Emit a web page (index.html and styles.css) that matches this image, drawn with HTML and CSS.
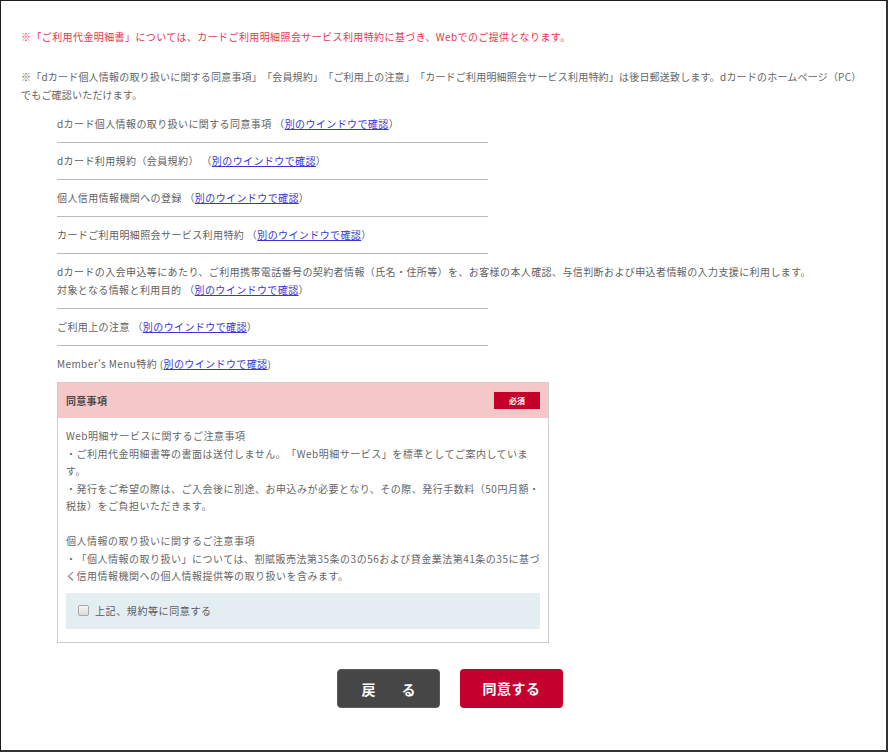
FILE: index.html
```html
<!DOCTYPE html>
<html lang="ja">
<head>
<meta charset="utf-8">
<title>同意事項</title>
<link rel="stylesheet" href="styles.css">
</head>
<body>
<div class="page">
  <p class="notice">※「ご利用代金明細書」については、カードご利用明細照会サービス利用特約に基づき、Webでのご提供となります。</p>
  <p class="note">※「dカード個人情報の取り扱いに関する同意事項」「会員規約」「ご利用上の注意」「カードご利用明細照会サービス利用特約」は後日郵送致します。dカードのホームページ（PC）<br>でもご確認いただけます。</p>

  <ul class="terms">
    <li class="term">dカード個人情報の取り扱いに関する同意事項 （<a href="#">別のウインドウで確認</a>）</li>
    <li class="term">dカード利用規約（会員規約） （<a href="#">別のウインドウで確認</a>）</li>
    <li class="term">個人信用情報機関への登録 （<a href="#">別のウインドウで確認</a>）</li>
    <li class="term">カードご利用明細照会サービス利用特約 （<a href="#">別のウインドウで確認</a>）</li>
    <li class="term">dカードの入会申込等にあたり、ご利用携帯電話番号の契約者情報（氏名・住所等）を、お客様の本人確認、与信判断および申込者情報の入力支援に利用します。<br>対象となる情報と利用目的 （<a href="#">別のウインドウで確認</a>）</li>
    <li class="term">ご利用上の注意 （<a href="#">別のウインドウで確認</a>）</li>
    <li class="term term-last">Member's Menu特約 (<a href="#">別のウインドウで確認</a>)</li>
  </ul>

  <section class="agree">
    <div class="agree-head">
      <span class="agree-title">同意事項</span>
      <span class="badge">必須</span>
    </div>
    <div class="agree-body">
      <p class="agree-text">Web明細サービスに関するご注意事項<br>・ご利用代金明細書等の書面は送付しません。「Web明細サービス」を標準としてご案内していま<br>す。<br>・発行をご希望の際は、ご入会後に別途、お申込みが必要となり、その際、発行手数料（50円月額・<br>税抜）をご負担いただきます。</p>
      <p class="agree-text gap">個人情報の取り扱いに関するご注意事項<br>・「個人情報の取り扱い」については、割賦販売法第35条の3の56および貸金業法第41条の35に基づ<br>く信用情報機関への個人情報提供等の取り扱いを含みます。</p>
      <label class="check-panel">
        <input type="checkbox" class="check">
        <span class="check-label">上記、規約等に同意する</span>
      </label>
    </div>
  </section>

  <div class="actions">
    <button class="btn btn-back" type="button">戻　る</button>
    <button class="btn btn-agree" type="button">同意する</button>
  </div>
</div>
</body>
</html>
```

FILE: styles.css
```css
html, body {
  margin: 0;
  padding: 0;
  background: #ffffff;
}

body {
  font-family: "Noto Sans CJK JP", "Noto Sans", sans-serif;
  font-size: 10px;
  letter-spacing: 0.4px;
  color: #666666;
  text-spacing-trim: space-all;
}

.page {
  box-sizing: border-box;
  width: 888px;
  height: 752px;
  border-style: solid;
  border-width: 1px 2px 2px 1px;
  border-color: #1c1c1c #333333 #333333 #1c1c1c;
  padding: 27px 0 0 20px;
  overflow: hidden;
}

.notice {
  margin: 0;
  line-height: 18px;
  color: #e8354f;
  white-space: nowrap;
}

.note {
  margin: 22px 0 0;
  line-height: 18px;
  color: #666666;
  letter-spacing: 0.2px;
  white-space: nowrap;
}

.terms {
  list-style: none;
  margin: 2px 0 0 36px;
  padding: 0;
}

.term {
  width: 431px;
  padding: 9px 0;
  line-height: 18px;
  border-bottom: 1px solid #b8b8b8;
  white-space: nowrap;
  color: #5f5f5f;
}

.term-last {
  border-bottom: none;
}

.term a {
  color: #3a35d6;
  text-decoration: underline;
}

.agree {
  box-sizing: border-box;
  width: 492px;
  margin-left: 36px;
  border: 1px solid #cfcfcf;
  background: #ffffff;
}

.agree-head {
  height: 35px;
  padding: 0 8px;
  display: flex;
  align-items: center;
  justify-content: space-between;
  background: #f4c7c9;
}

.agree-title {
  font-weight: bold;
  color: #4a4a4a;
  letter-spacing: 0.3px;
}

.badge {
  width: 46px;
  height: 17px;
  display: flex;
  align-items: center;
  justify-content: center;
  background: #c4002b;
  color: #ffffff;
  font-size: 8px;
  font-weight: bold;
  letter-spacing: 0;
}

.agree-body {
  padding: 9px 8px 13px;
}

.agree-text {
  margin: 0;
  line-height: 17.5px;
  letter-spacing: 0.5px;
  color: #666666;
  white-space: nowrap;
}

.agree-text.gap {
  margin-top: 17.5px;
}

.check-panel {
  margin-top: 8px;
  height: 36px;
  padding-left: 12px;
  display: flex;
  align-items: center;
  gap: 6px;
  background: #e4edf2;
}

.check {
  appearance: none;
  -webkit-appearance: none;
  margin: 0;
  width: 11px;
  height: 11px;
  border: 1px solid #a8a8a8;
  border-radius: 2px;
  background: linear-gradient(#f6f6f6, #dcdcdc);
  box-sizing: border-box;
}

.check-label {
  color: #5a5a5a;
  letter-spacing: 0.6px;
}

.actions {
  margin: 26px 7px 0 0;
  display: flex;
  justify-content: center;
  gap: 20px;
}

.btn {
  width: 103px;
  height: 39px;
  border: none;
  border-radius: 4px;
  font-family: "Noto Sans CJK JP", sans-serif;
  font-size: 14px;
  font-weight: bold;
  color: #ffffff;
  padding: 0;
  line-height: 39px;
}

.btn-back {
  background: #464646;
  border: 1px solid #5a5a5a;
  letter-spacing: 6px;
  text-indent: 6px;
}

.btn-agree {
  background: #c3002f;
  letter-spacing: 0.5px;
}
```
